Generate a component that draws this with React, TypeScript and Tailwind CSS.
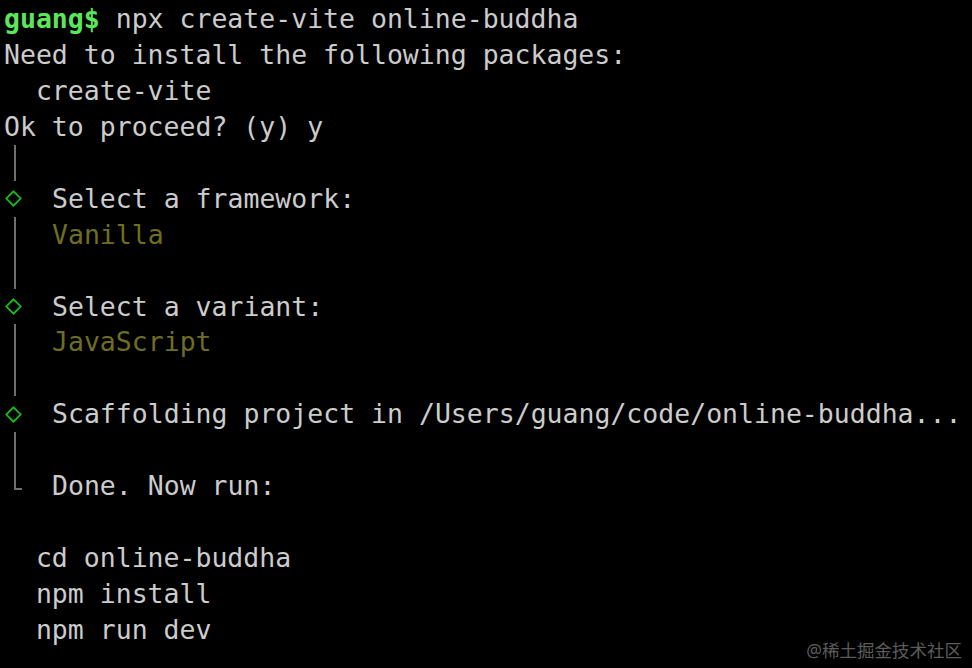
import React from "react";

const Bar = () => (
  <span className="flex w-[48px] h-full shrink-0 pl-[10px]">
    <span className="h-full border-l-2 border-[#6f6f6f]" />
  </span>
);

const Diamond = () => (
  <span className="flex w-[48px] h-full shrink-0 items-center pl-[1px]">
    <svg width="17" height="17" viewBox="0 0 17 17">
      <path d="M8.5 1.3 L15.7 8.5 L8.5 15.7 L1.3 8.5 Z" fill="none" stroke="#16c416" strokeWidth="1.7" />
    </svg>
  </span>
);

const Corner = () => (
  <span className="flex w-[48px] h-full shrink-0 pl-[10px]">
    <span className="h-[22px] w-[8px] border-l-2 border-b-2 border-[#6f6f6f]" />
  </span>
);

type Line = { g?: "bar" | "dia" | "corner"; t?: React.ReactNode };

export default function App() {
  const lines: Line[] = [
    {
      t: (
        <>
          <span className="font-bold text-[#5ae85a]">guang$</span> npx create-vite online-buddha
        </>
      ),
    },
    { t: "Need to install the following packages:" },
    { t: "  create-vite" },
    { t: "Ok to proceed? (y) y" },
    { g: "bar" },
    { g: "dia", t: "Select a framework:" },
    { g: "bar", t: <span className="text-[#6e6e22]">Vanilla</span> },
    { g: "bar" },
    { g: "dia", t: "Select a variant:" },
    { g: "bar", t: <span className="text-[#6e6e22]">JavaScript</span> },
    { g: "bar" },
    { g: "dia", t: "Scaffolding project in /Users/guang/code/online-buddha..." },
    { g: "bar" },
    { g: "corner", t: "Done. Now run:" },
    {},
    { t: "  cd online-buddha" },
    { t: "  npm install" },
    { t: "  npm run dev" },
  ];

  return (
    <div
      className="relative w-[972px] h-[668px] bg-black overflow-hidden pt-[1px] pl-[4px] text-[#cccccc] text-[26.5px]"
      style={{ fontFamily: '"DejaVu Sans Mono", "Liberation Mono", monospace' }}
    >
      {lines.map((l, i) => (
        <div key={i} className="flex h-[35.94px] items-center whitespace-pre leading-[35.94px]">
          {l.g === "bar" && <Bar />}
          {l.g === "dia" && <Diamond />}
          {l.g === "corner" && <Corner />}
          {l.t !== undefined && <span>{l.t}</span>}
        </div>
      ))}
      <div
        className="absolute right-[10px] bottom-[9px] text-[17.5px] leading-none text-[#5c5c5c]"
        style={{ fontFamily: '"Noto Sans", "Noto Sans CJK SC", sans-serif' }}
      >
        @稀土掘金技术社区
      </div>
    </div>
  );
}
